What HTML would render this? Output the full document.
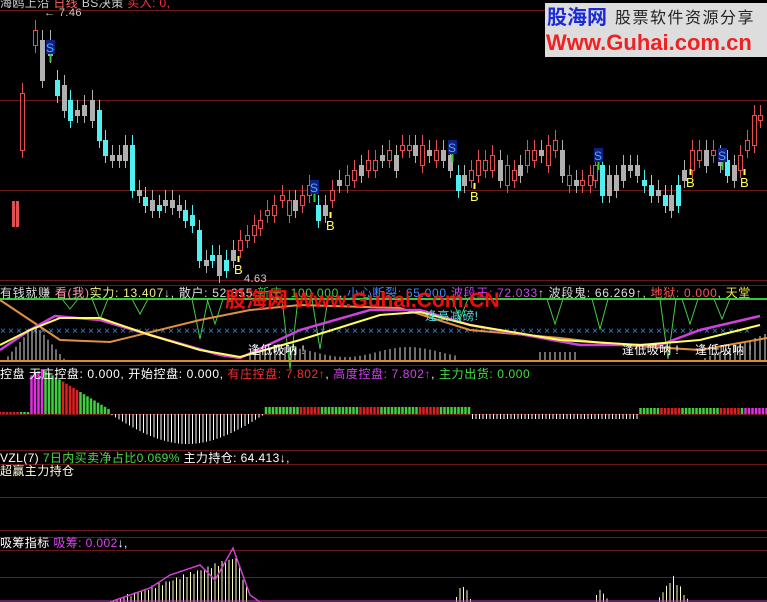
<!DOCTYPE html>
<html><head><meta charset="utf-8"><style>
html,body{margin:0;padding:0;background:#000;}
body{width:767px;height:602px;overflow:hidden;position:relative;font-family:"Liberation Sans","Noto Sans CJK SC",sans-serif;}
.t{position:absolute;font-size:12px;line-height:13px;white-space:nowrap;letter-spacing:.4px;}
svg{position:absolute;left:0;top:0;}
</style></head><body>
<svg id="s" width="767" height="602" viewBox="0 0 767 602"></svg>
<div class="t" style="left:0;top:-3px;color:#ccc">海鸥上沿 <span style="color:#f66">日线</span> BS决策 <span style="color:#f33">买入: 0,</span></div>
<div class="t" style="left:44px;top:7px;color:#ccc;font-size:11px">← 7.46</div>
<div class="t" style="left:244px;top:273px;color:#ccc;font-size:11px">4.63</div>
<div class="t" style="left:0;top:287px;color:#ddd;letter-spacing:.7px">有钱就赚 <span style="color:#f9a">看(我)</span><span style="color:#ee8">实力: 13.407</span>↓, 散户: 52.355 <span style="color:#4c4">新庄: 100.000</span>, <span style="color:#48f">小心断裂: 65.000</span> <span style="color:#c4e">波段王: 72.033</span>↑ 波段鬼: 66.269↑, <span style="color:#f55">地狱: 0.000</span>, <span style="color:#ee4">天堂</span></div>
<div class="t" style="left:225px;top:289px;color:#f11;font-size:21px;line-height:24px;font-weight:bold;opacity:.92;letter-spacing:0">股海网 Www.Guhai.Com.CN</div>
<div class="t" style="left:425px;top:310px;color:#5dd">逢高减磅!</div>
<div class="t" style="left:248px;top:344px;color:#fff">逢低吸呐 !</div>
<div class="t" style="left:622px;top:344px;color:#fff">逢低吸呐 !</div>
<div class="t" style="left:695px;top:344px;color:#fff">逢低吸呐 !</div>
<div class="t" style="left:0;top:368px;color:#fff;letter-spacing:.6px">控盘 无庄控盘: 0.000, 开始控盘: 0.000, <span style="color:#e33">有庄控盘: 7.802↑</span>, <span style="color:#c4e">高度控盘: 7.802↑</span>, <span style="color:#4d4">主力出货: 0.000</span></div>
<div class="t" style="left:0;top:452px;color:#fff">VZL(7) <span style="color:#4d4">7日内买卖净占比0.069%</span> 主力持仓: 64.413↓,</div>
<div class="t" style="left:0;top:465px;color:#ffd">超赢主力持仓</div>
<div class="t" style="left:0;top:537px;color:#fff">吸筹指标 <span style="color:#d4e">吸筹: 0.002</span>↓,</div>
<div style="position:absolute;left:545px;top:3px;width:222px;height:54px;background:#ddd"></div>
<div class="t" style="left:547px;top:6px;color:#1a2ad8;font-size:20px;line-height:24px;font-weight:bold;letter-spacing:0">股海网</div>
<div class="t" style="left:615px;top:9px;color:#222;font-size:16px;line-height:20px;letter-spacing:1.5px">股票软件资源分享</div>
<div class="t" style="left:546px;top:30px;color:#e22;font-size:22px;line-height:26px;font-weight:bold;letter-spacing:0">Www.Guhai.com.cn</div>
<script>
var s=document.getElementById('s'),h='';
function L(x1,y1,x2,y2,c,w){h+='<line x1="'+x1+'" y1="'+y1+'" x2="'+x2+'" y2="'+y2+'" stroke="'+c+'" stroke-width="'+(w||1)+'"/>';}
function R(x,y,w,hh,f,st){h+='<rect x="'+x+'" y="'+y+'" width="'+w+'" height="'+hh+'" fill="'+f+'"'+(st?' stroke="'+st+'"':'')+'/>';}
function P(pts,c,w){h+='<polyline fill="none" stroke="'+c+'" stroke-width="'+(w||1)+'" points="'+pts+'"/>';}
[10,100,190,280,285].forEach(y=>L(0,y+.5,767,y+.5,'#6a1818'));
[365,414,450,464,497,530,537,550,577].forEach(y=>L(0,y+.5,767,y+.5,'#6a1818'));
var c=[[20,93,150,'r'],[33,30,45,'r'],[40,40,80,'g'],[48,40,55,'w'],[55,80,95,'c'],[62,85,110,'w'],[68,100,120,'c'],[75,110,115,'w'],[82,105,115,'w'],[90,100,120,'w'],[97,110,140,'c'],[103,140,155,'c'],[110,155,160,'w'],[117,155,160,'w'],[123,145,160,'w'],[130,145,190,'c'],[137,190,195,'w'],[143,197,205,'c'],[150,200,210,'w'],[157,205,210,'c'],[163,200,205,'w'],[170,200,207,'w'],[177,205,210,'w'],[183,210,220,'c'],[190,215,225,'c'],[197,230,260,'c'],[204,260,265,'w'],[210,255,260,'c'],[217,255,275,'w'],[224,260,270,'c'],[231,250,260,'w'],[238,240,250,'r'],[245,235,240,'r'],[252,225,235,'r'],[258,220,228,'r'],[265,210,215,'r'],[272,205,215,'r'],[280,195,200,'r'],[287,200,215,'r'],[293,200,210,'w'],[300,195,205,'r'],[307,185,195,'r'],[316,205,220,'c'],[323,205,215,'w'],[330,190,200,'r'],[337,180,185,'w'],[345,175,185,'r'],[352,170,180,'r'],[359,165,175,'w'],[366,160,170,'r'],[373,160,170,'r'],[380,155,160,'w'],[387,150,160,'r'],[394,155,170,'w'],[400,145,150,'r'],[407,145,150,'r'],[413,145,155,'w'],[420,145,165,'r'],[427,150,155,'w'],[434,150,160,'r'],[441,150,160,'w'],[448,155,170,'w'],[456,175,190,'c'],[462,175,185,'w'],[469,170,180,'r'],[476,160,175,'r'],[483,160,170,'r'],[490,155,170,'r'],[498,160,180,'w'],[505,165,185,'r'],[512,170,180,'r'],[518,165,175,'w'],[525,150,165,'r'],[532,150,160,'r'],[539,150,155,'w'],[546,145,165,'r'],[553,140,150,'r'],[560,150,175,'w'],[567,175,185,'r'],[574,180,185,'w'],[580,180,185,'r'],[588,175,185,'r'],[593,165,180,'r'],[600,165,195,'c'],[607,175,195,'w'],[614,175,190,'w'],[621,165,180,'w'],[628,165,170,'w'],[635,165,175,'w'],[642,180,185,'c'],[649,185,195,'c'],[656,190,195,'w'],[663,195,205,'c'],[669,195,210,'w'],[676,185,205,'c'],[682,170,180,'w'],[690,150,170,'r'],[697,150,160,'r'],[704,150,165,'w'],[711,150,155,'r'],[718,155,165,'w'],[725,160,175,'c'],[732,165,180,'w'],[738,155,170,'r'],[745,140,150,'r'],[752,115,145,'r'],[758,115,120,'r']];
var col={r:'#e05050',c:'#50f0f0',w:'#b0b0b0',g:'#b0b0b0'};
c.forEach(d=>{var k=col[d[3]];L(d[0]+2.5,d[1]-10,d[0]+2.5,d[2]+8,k);if(d[3]=='r')R(d[0]+.5,d[1]+.5,4,d[2]-d[1],'#000',k);else R(d[0],d[1],5,d[2]-d[1]+1,k);});
R(12,201,7,26,'#e05050');R(15,201,1,26,'#000');
[[50,48],[314,188],[452,148],[598,156],[722,156]].forEach(p=>{R(p[0]-4,p[1]-8,9,14,'#102080');h+='<text x="'+(p[0]-4)+'" y="'+(p[1]+4)+'" fill="#5af" font-size="12" font-family="Liberation Sans">S</text>';L(p[0]+.5,p[1]+6,p[0]+.5,p[1]+14,'#3c3',2);});
[[238,266],[330,222],[474,193],[690,179],[744,179]].forEach(p=>{h+='<text x="'+(p[0]-4)+'" y="'+(p[1]+8)+'" fill="#ffff50" font-size="13" font-family="Liberation Sans">B</text>';L(p[0]+.5,p[1]-10,p[0]+.5,p[1]-4,'#ff5',2);});
L(0,299,767,299,'#3c3',2);
var vs=[[70,10],[100,20],[140,15],[200,40],[215,25],[290,70],[320,50],[460,20],[555,25],[600,30],[668,60],[690,25],[722,20]];
vs.forEach(v=>{P((v[0]-8)+',299 '+v[0]+','+(299+v[1])+' '+(v[0]+8)+',299','#4c4');});
for(var x=0;x<750;x+=8)h+='<text x="'+x+'" y="334" fill="#3a8ad8" font-size="10" font-family="Liberation Sans">×</text>';
for(var x=0;x<100;x+=4){var y=360-Math.max(0,30-Math.abs(x-35))*1.2;L(x,y,x,361,'#ddd');}
for(var x=250;x<460;x+=5){var y=360-8-Math.sin(x/20)*5;L(x,y,x,361,'#ddd');}
for(var x=540;x<580;x+=5)L(x,352,x,361,'#ddd');
for(var x=700;x<767;x+=5)L(x,360-(x-700)*0.4,x,361,'#ddd');
L(0,361,767,361,'#e08a30',2);
P('0,300 30,320 60,340 110,342 200,320 250,310 300,305 400,308 470,330 560,338 620,345 700,350 767,338','#e09040',2);
P('0,350 30,330 55,316 100,320 150,335 220,355 240,358 300,330 370,310 420,310 470,325 580,345 660,345 700,330 760,316','#d040e0',2.5);
P('0,345 30,330 60,318 100,318 150,335 200,350 240,357 300,340 380,315 420,312 470,325 560,340 640,345 700,340 760,325','#ffff60',2);
for(var x=0;x<767;x+=3.5){var v;if(x<30)v=2;else if(x<110)v=Math.max(0,45-Math.abs(x-42)*0.6);else if(x<265)v=-Math.sin((x-110)/155*Math.PI)*30;else if(x<470)v=7;else if(x<640)v=-5;else v=6;
var k=v>=0?((x>30&&x<45)||x>745?'#e030e0':(Math.floor(x/20)%3==0?'#e02020':'#40d040')):'#fff';
if(v>=0)L(x,414-v,x,414,k,2.5);else L(x,414,x,414-v,k,1);}
for(var x=110;x<767;x+=3.5){var v=0;if(x<250)v=Math.max(0,(x<233?(x-110)*0.35:54-(x-233)*3));if(x>455&&x<480)v=Math.max(0,18-Math.abs(x-463)*2);if(x>595&&x<620)v=Math.max(0,12-Math.abs(x-600)*1.2);if(x>655&&x<700)v=Math.max(0,25-Math.abs(x-673)*1.5);v+=Math.sin(x)*2*(v>5);if(v>0)L(x,602-v,x,602,'#ffffc0');}
P('110,602 150,588 170,575 200,565 215,580 233,548 250,595 260,602','#d040d0',1.5);
L(0,601,767,601,'#c040c0',1);
s.innerHTML=h;
</script>
</body></html>
